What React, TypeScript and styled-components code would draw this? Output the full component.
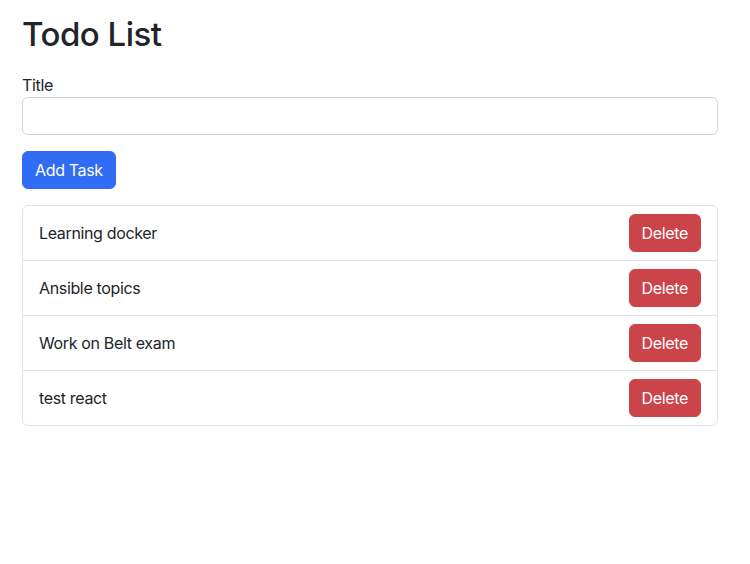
import React, { useState } from "react";
import styled, { createGlobalStyle } from "styled-components";

const GlobalStyle = createGlobalStyle`
  *, *::before, *::after { box-sizing: border-box; }
  body {
    margin: 0;
    background: #fff;
    color: #212529;
    font-family: Inter, "Noto Sans", "Liberation Sans", sans-serif;
    font-size: 16px;
    line-height: 1.5;
    letter-spacing: -0.35px;
  }
`;

const Container = styled.div`
  padding: 15px 32px 0 22px;
`;

const Heading = styled.h1`
  margin: 0 0 18px;
  font-size: 33px;
  font-weight: 500;
  line-height: 1.2;
  letter-spacing: -0.5px;
`;

const Label = styled.label`
  display: block;
  margin-bottom: 0;
`;

const Input = styled.input`
  display: block;
  width: 100%;
  height: 38px;
  padding: 6px 12px;
  font: inherit;
  color: #212529;
  border: 1px solid #ced4da;
  border-radius: 6px;
  outline: none;
`;

const Button = styled.button<{ $variant: "primary" | "danger" }>`
  display: inline-block;
  height: 38px;
  padding: 6px 12px;
  font: inherit;
  letter-spacing: inherit;
  color: #fff;
  background: ${(p) => (p.$variant === "primary" ? "#316cf4" : "#cb444a")};
  border: 1px solid ${(p) => (p.$variant === "primary" ? "#316cf4" : "#cb444a")};
  border-radius: 6px;
  cursor: pointer;
`;

const AddButton = styled(Button)`
  margin-top: 16px;
`;

const List = styled.ul`
  margin: 16px 0 0;
  padding: 0;
  list-style: none;
  border: 1px solid #dee2e6;
  border-radius: 6px;
`;

const Item = styled.li`
  display: flex;
  align-items: center;
  justify-content: space-between;
  padding: 8px 16px;
  & + & { border-top: 1px solid #dee2e6; }
`;

export default function App() {
  const [tasks, setTasks] = useState([
    "Learning docker",
    "Ansible topics",
    "Work on Belt exam",
    "test react",
  ]);
  const [title, setTitle] = useState("");

  return (
    <>
      <GlobalStyle />
      <Container>
        <Heading>Todo List</Heading>
        <Label htmlFor="title">Title</Label>
        <Input id="title" value={title} onChange={(e) => setTitle(e.target.value)} />
        <AddButton
          $variant="primary"
          onClick={() => {
            if (title.trim()) setTasks([...tasks, title.trim()]);
            setTitle("");
          }}
        >
          Add Task
        </AddButton>
        <List>
          {tasks.map((t, i) => (
            <Item key={i}>
              <span>{t}</span>
              <Button $variant="danger" onClick={() => setTasks(tasks.filter((_, j) => j !== i))}>
                Delete
              </Button>
            </Item>
          ))}
        </List>
      </Container>
    </>
  );
}
